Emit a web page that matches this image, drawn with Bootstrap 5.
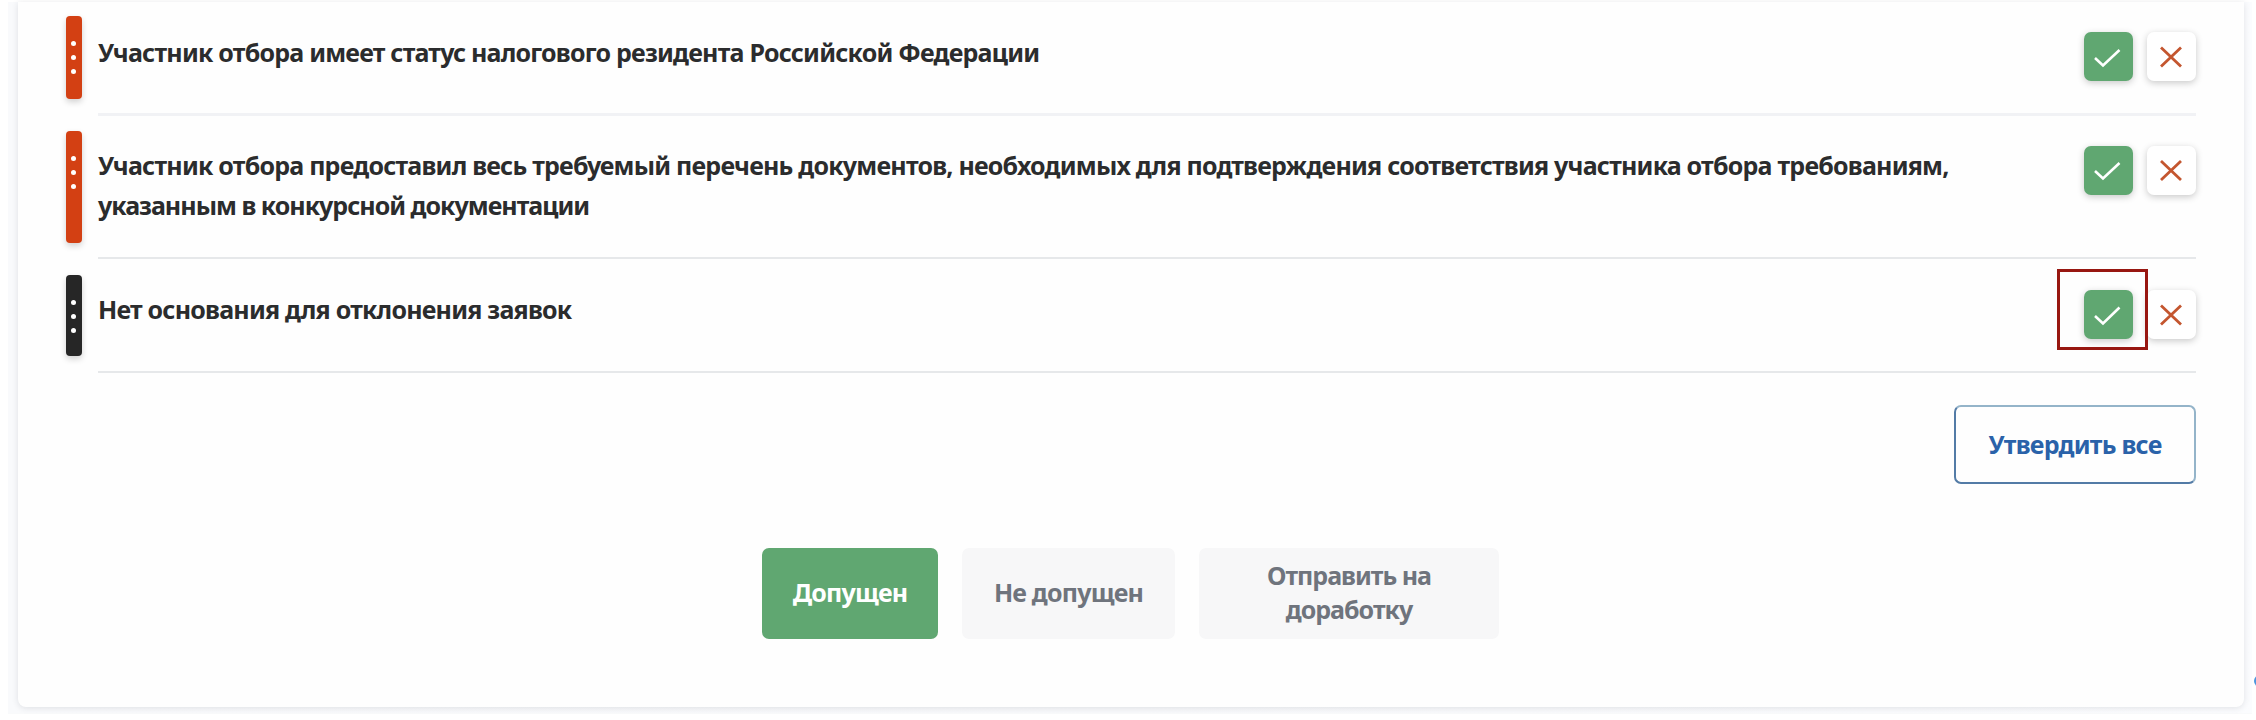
<!DOCTYPE html>
<html lang="ru">
<head>
<meta charset="utf-8">
<meta name="viewport" content="width=device-width, initial-scale=1">
<title>Проверка заявки</title>
<link href="https://cdn.jsdelivr.net/npm/bootstrap@5.3.0/dist/css/bootstrap.min.css" rel="stylesheet">
<style>
  body { background: #fff; font-family: "Noto Sans", sans-serif; font-size: 25px; font-weight: 700; line-height: 40px; letter-spacing: -.78px; color: #2b2c2d; }
  .page { height: 720px; padding: 2px 4px 3px 8px; }
  .backdrop { background: linear-gradient(90deg, #f9fafc, #f8f9fb 50%, #fbfcfe); padding: 0 8px 8px 10px; height: 712px; border-bottom: 1px solid #f9fafb; }
  .sheet { background: #fefefe; height: 705px; border-radius: 0 0 8px 8px; box-shadow: 0 1px 6px rgba(40, 50, 60, .13); padding: 0 48px; }
  .criterion { height: 143px; }
  .criterion.short { height: 114px; }
  .grip { width: 16px; margin-right: 16px; border-radius: 4px; background: #d34013; box-shadow: 0 3px 6px rgba(0, 0, 0, .18); padding-top: 25px; gap: 9px; }
  .grip.dark { background: #262626; }
  .grip i { width: 5px; height: 5px; border-radius: 50%; background: #fff; margin-right: 2px; }
  .item { border-bottom: 2px solid #e6e8ea; padding-top: 30px; }
  .item.soft { border-bottom: 3px solid #f1f2f5; }
  .copy { width: 1880px; }
  .raised { margin-top: -1px; }
  .actions { gap: 14px; }
  .sq { width: 49px; height: 49px; padding: 0; border: 0; border-radius: 7px; background: #fff; box-shadow: 0 2px 7px rgba(0, 0, 0, .21); }
  .sq.ok { background: #60a771; }
  .frame { left: -27px; top: -21px; width: 91px; height: 81px; border: 3px solid #981711; }
  .approve { width: 242px; height: 79px; border: 2px solid #537ba6; border-top-color: #94b4c9; border-right-color: #94b4c9; border-radius: 7px; color: #2a62a9; font: inherit; letter-spacing: -.76px; background: #fefefe; padding: 0 0 1px; }
  .verdicts { gap: 24px; margin-left: 696px; margin-top: 64px; }
  .verdict { height: 91px; border: 0; border-radius: 7px; background: #f7f7f8; color: #6f747d; font: inherit; letter-spacing: -.8px; line-height: 34px; padding: 0 0 3px; }
  .verdict.ok { width: 176px; background: #60a771; color: #fff; }
  .verdict.no { width: 213px; }
  .verdict.back { width: 300px; letter-spacing: -1px; }
  .edge-dot { left: 2254px; top: 675px; width: 12px; height: 12px; border-radius: 50%; background: #4b96de; }
</style>
</head>
<body class="overflow-hidden">
<main class="page position-relative overflow-hidden">
  <div class="backdrop">
    <section class="sheet">
      <div>
        <div class="criterion short d-flex">
          <div class="grip d-flex flex-column align-items-center" style="height:83px;margin-top:14px"><i></i><i></i><i></i></div>
          <div class="item soft flex-grow-1 d-flex justify-content-between align-items-start">
            <div class="copy">Участник отбора имеет статус налогового резидента Российской Федерации</div>
            <div class="actions d-flex">
              <button class="btn sq ok" aria-label="Да"><svg class="d-block" width="49" height="49" fill="none" stroke="#fff" stroke-width="2.6"><path d="M11 26 19 33.5 35.5 18"/></svg></button>
              <button class="btn sq" aria-label="Нет"><svg class="d-block" width="49" height="49" fill="none" stroke="#c4562f" stroke-width="2.8"><path d="M14 15.5 34 34.5M34 15.5 14 34.5"/></svg></button>
            </div>
          </div>
        </div>
        <div class="criterion d-flex">
          <div class="grip d-flex flex-column align-items-center" style="height:112px;margin-top:15px"><i></i><i></i><i></i></div>
          <div class="item flex-grow-1 d-flex justify-content-between align-items-start">
            <div class="copy raised">Участник отбора предоставил весь требуемый перечень документов, необходимых для подтверждения соответствия участника отбора требованиям,<br><span style="letter-spacing:-1px">указанным в конкурсной документации</span></div>
            <div class="actions d-flex">
              <button class="btn sq ok" aria-label="Да"><svg class="d-block" width="49" height="49" fill="none" stroke="#fff" stroke-width="2.6"><path d="M11 25 19 32.5 35.5 17"/></svg></button>
              <button class="btn sq" aria-label="Нет"><svg class="d-block" width="49" height="49" fill="none" stroke="#c4562f" stroke-width="2.8"><path d="M14 15 34 34M34 15 14 34"/></svg></button>
            </div>
          </div>
        </div>
        <div class="criterion short d-flex">
          <div class="grip dark d-flex flex-column align-items-center" style="height:81px;margin-top:16px"><i></i><i></i><i></i></div>
          <div class="item flex-grow-1 d-flex justify-content-between align-items-start" style="padding-top:31px">
            <div class="copy raised">Нет основания для отклонения заявок</div>
            <div class="actions d-flex position-relative">
              <button class="btn sq ok" aria-label="Да"><svg class="d-block" width="49" height="49" fill="none" stroke="#fff" stroke-width="2.6"><path d="M11 26 19 33.5 35.5 17.5"/></svg></button>
              <button class="btn sq" aria-label="Нет"><svg class="d-block" width="49" height="49" fill="none" stroke="#c4562f" stroke-width="2.8"><path d="M14 15.5 34 34.5M34 15.5 14 34.5"/></svg></button>
              <div class="frame position-absolute"></div>
            </div>
          </div>
        </div>
      </div>
      <div class="d-flex justify-content-end" style="padding-top:32px"><button class="btn approve">Утвердить все</button></div>
      <div class="verdicts d-flex">
        <button class="btn verdict ok">Допущен</button>
        <button class="btn verdict no">Не допущен</button>
        <button class="btn verdict back">Отправить на<br>доработку</button>
      </div>
    </section>
  </div>
  <span class="edge-dot position-absolute"></span>
</main>
<script src="https://cdn.jsdelivr.net/npm/bootstrap@5.3.0/dist/js/bootstrap.bundle.min.js"></script>
</body>
</html>
